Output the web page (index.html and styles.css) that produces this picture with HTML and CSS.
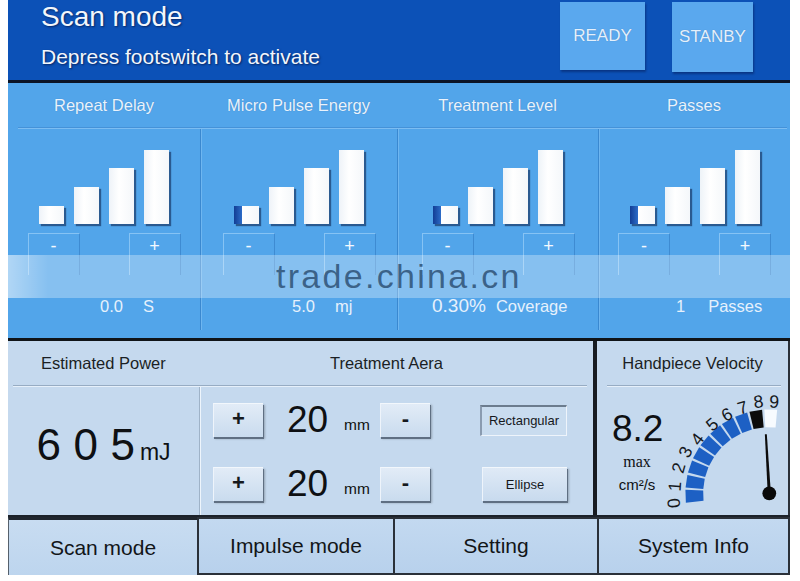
FILE: index.html
```html
<!DOCTYPE html>
<html>
<head>
<meta charset="utf-8">
<link rel="stylesheet" href="styles.css">
</head>
<body>
<div class="screen">
  <header class="top">
    <div class="title">
      <div class="mode">Scan mode</div>
      <div class="hint">Depress footswitch to activate</div>
    </div>
    <div class="status">
      <div class="sbtn ready">READY</div>
      <div class="sbtn stanby">STANBY</div>
    </div>
  </header>

  <section class="params">
    <div class="phead">
      <div class="plabel">Repeat Delay</div>
      <div class="plabel">Micro Pulse Energy</div>
      <div class="plabel">Treatment Level</div>
      <div class="plabel">Passes</div>
    </div>
    <div class="psep"></div>
    <div class="pbody">
      <div class="pcol">
        <div class="bars"><span class="bar b1"></span><span class="bar b2"></span><span class="bar b3"></span><span class="bar b4"></span></div>
        <div class="pm"><span class="pbtn">-</span><span class="pbtn">+</span></div>
        <div class="val v1"><span>0.0</span><span class="unit">S</span></div>
      </div>
      <div class="pcol">
        <div class="bars"><span class="bar b1 on"></span><span class="bar b2"></span><span class="bar b3"></span><span class="bar b4"></span></div>
        <div class="pm"><span class="pbtn">-</span><span class="pbtn">+</span></div>
        <div class="val v2"><span>5.0</span><span class="unit">mj</span></div>
      </div>
      <div class="pcol">
        <div class="bars"><span class="bar b1 on"></span><span class="bar b2"></span><span class="bar b3"></span><span class="bar b4"></span></div>
        <div class="pm"><span class="pbtn">-</span><span class="pbtn">+</span></div>
        <div class="val v3"><span class="big">0.30%</span><span class="unit">Coverage</span></div>
      </div>
      <div class="pcol">
        <div class="bars"><span class="bar b1 on"></span><span class="bar b2"></span><span class="bar b3"></span><span class="bar b4"></span></div>
        <div class="pm"><span class="pbtn">-</span><span class="pbtn">+</span></div>
        <div class="val v4"><span>1</span><span class="unit">Passes</span></div>
      </div>
    </div>
  </section>

  <section class="mid">
    <div class="mleft">
      <div class="mhead">
        <div class="mlabel power-l">Estimated Power</div>
        <div class="mlabel area-l">Treatment Aera</div>
      </div>
      <div class="msep"></div>
      <div class="mbody">
        <div class="power"><span class="pw"><span>6</span><span>0</span><span>5</span></span><span class="pwu">mJ</span></div>
        <div class="area">
          <div class="trow">
            <span class="sq">+</span><span class="num">20</span><span class="mm">mm</span><span class="sq">-</span>
            <span class="shape pressed">Rectangular</span>
          </div>
          <div class="trow">
            <span class="sq">+</span><span class="num">20</span><span class="mm">mm</span><span class="sq">-</span>
            <span class="shape raised">Ellipse</span>
          </div>
        </div>
      </div>
    </div>
    <div class="mdiv"></div>
    <div class="mright">
      <div class="mhead single"><div class="mlabel">Handpiece Velocity</div></div>
      <div class="msep short"></div>
      <div class="vbody">
        <div class="readout">
          <div class="speed">8.2</div>
          <div class="max">max</div>
          <div class="cms">cm²/s</div>
        </div>
        <svg class="gauge" width="130" height="128" viewBox="0 0 130 128">
          <g class="segs">
            <polygon class="seg" points="44,101.8 26,100.5 26,113.5 44,112.2" transform="rotate(-2 111 107)"/>
            <polygon class="seg" points="44,101.8 26,100.5 26,113.5 44,112.2" transform="rotate(8.3 111 107)"/>
            <polygon class="seg" points="44,101.8 26,100.5 26,113.5 44,112.2" transform="rotate(18.7 111 107)"/>
            <polygon class="seg" points="44,101.8 26,100.5 26,113.5 44,112.2" transform="rotate(29 111 107)"/>
            <polygon class="seg" points="44,101.8 26,100.5 26,113.5 44,112.2" transform="rotate(39.3 111 107)"/>
            <polygon class="seg" points="44,101.8 26,100.5 26,113.5 44,112.2" transform="rotate(49.7 111 107)"/>
            <polygon class="seg" points="44,101.8 26,100.5 26,113.5 44,112.2" transform="rotate(60 111 107)"/>
            <polygon class="seg" points="44,101.8 26,100.5 26,113.5 44,112.2" transform="rotate(70.3 111 107)"/>
            <polygon class="seg cur" points="44,101.8 26,100.5 26,113.5 44,112.2" transform="rotate(80.7 111 107)"/>
            <polygon class="seg off" points="44,101.8 26,100.5 26,113.5 44,112.2" transform="rotate(91 111 107)"/>
          </g>
          <g class="ticks">
            <text x="14" y="117" transform="rotate(-95 14 117)">0</text>
            <text x="15" y="100" transform="rotate(-86 15 100)">1</text>
            <text x="19" y="81" transform="rotate(-74 19 81)">2</text>
            <text x="26" y="65" transform="rotate(-64 26 65)">3</text>
            <text x="38" y="52" transform="rotate(-53 38 52)">4</text>
            <text x="53" y="37" transform="rotate(-40 53 37)">5</text>
            <text x="68" y="27" transform="rotate(-28.6 68 27)">6</text>
            <text x="84" y="20" transform="rotate(-17.4 84 20)">7</text>
            <text x="100" y="14" transform="rotate(-6.8 100 14)">8</text>
            <text x="116" y="14" transform="rotate(2.5 116 14)">9</text>
          </g>
          <polygon class="needle" points="106.5,47 108.5,47 112.6,107 109.4,107"/>
          <circle class="knob" cx="111" cy="107" r="7"/>
        </svg>
      </div>
    </div>
  </section>

  <nav class="tabs">
    <div class="tab active">Scan mode</div>
    <div class="tab">Impulse mode</div>
    <div class="tab">Setting</div>
    <div class="tab">System Info</div>
  </nav>

  <div class="watermark"><span>trade.china.cn</span></div>
</div>
</body>
</html>
```

FILE: styles.css
```css
* { box-sizing: border-box; }
html, body { margin: 0; padding: 0; background: #ffffff; }
body { font-family: "Liberation Sans", Arial, sans-serif; }

.screen {
  position: relative;
  width: 782px;
  margin-left: 8px;
}

/* ---------- header ---------- */
.top {
  height: 83px;
  background: #0c51b7;
  border-bottom: 3px solid #0b1426;
  display: flex;
  justify-content: space-between;
}
.title {
  padding: 1px 0 0 33px;
  color: #f2f6fc;
  text-shadow: 1px 1px 2px rgba(0, 0, 30, 0.55);
}
.mode { font-size: 28px; line-height: 32px; }
.hint { font-size: 21px; line-height: 24px; margin-top: 12px; }
.status {
  display: flex;
  gap: 27px;
  padding: 2px 37px 0 0;
}
.sbtn {
  background: #5aa8ee;
  color: #e4f0fc;
  font-size: 17px;
  display: flex;
  align-items: center;
  justify-content: center;
  box-shadow: 1px 2px 2px rgba(0, 0, 40, 0.35);
  text-shadow: 0 0 1px rgba(0, 0, 40, 0.25);
}
.ready { width: 85px; height: 68px; }
.stanby { width: 81px; height: 70px; }

/* ---------- parameter panel ---------- */
.params {
  background: #52a5ea;
  border-bottom: 3px solid #101418;
}
.phead {
  display: grid;
  grid-template-columns: 192px 197px 201px 192px;
  height: 44px;
  align-items: center;
}
.plabel {
  text-align: center;
  color: #e9f3fd;
  font-size: 16.5px;
  text-shadow: 0 0 1px rgba(0, 30, 80, 0.3);
}
.psep {
  height: 2px;
  margin: 0 3px 0 10px;
  border-top: 1px solid #4592d8;
  border-bottom: 1px solid #7cbdf2;
}
.pbody {
  display: grid;
  grid-template-columns: 192px 197px 201px 192px;
  height: 209px;
}
.pcol {
  height: 201px;
  padding-top: 21px;
  display: flex;
  flex-direction: column;
}
.pcol + .pcol {
  border-left: 1px solid #3a88d0;
  box-shadow: inset 1px 0 0 #6fb6f0;
}
.bars {
  height: 74px;
  display: flex;
  align-items: flex-end;
  justify-content: center;
  gap: 10px;
}
.bar {
  width: 25px;
  background: linear-gradient(90deg, #eef3f8, #ffffff 40%, #f4f7fa);
  box-shadow: 2px 2px 1px rgba(16, 40, 84, 0.6);
}
.bar.on { background: linear-gradient(90deg, #123d94 0, #2c6cc8 8px, #ffffff 8px, #f4f7fa); }
.b1 { height: 18px; }
.b2 { height: 37px; }
.b3 { height: 56px; }
.b4 { height: 74px; }
.pm {
  margin-top: 9px;
  height: 42px;
  display: flex;
  align-items: flex-start;
  justify-content: center;
  gap: 49px;
}
.pbtn {
  width: 52px;
  height: 42px;
  padding-top: 3px;
  border: 1px solid #86c3f4;
  border-right-color: #3e8bd2;
  border-bottom: none;
  color: #f4f9ff;
  font-size: 18px;
  line-height: 18px;
  text-align: center;
}
.val {
  margin-top: 21px;
  display: flex;
  align-items: baseline;
  color: #e6f1fc;
  font-size: 16.5px;
  line-height: 20px;
}
.val .big { font-size: 19px; }
.v1 { padding-left: 92px; gap: 20px; }
.v2 { padding-left: 91px; gap: 20px; }
.v3 { padding-left: 34px; gap: 10px; }
.v4 { padding-left: 77px; gap: 23px; }

/* ---------- middle panel ---------- */
.mid {
  display: flex;
  background: #c5d9ee;
  border-bottom: 2px solid #1c222a;
  height: 176px;
}
.mleft { width: 585px; }
.mhead {
  height: 44px;
  display: grid;
  grid-template-columns: 192px 393px;
  align-items: center;
}
.mhead.single { grid-template-columns: 1fr; }
.mlabel {
  text-align: center;
  font-size: 16.5px;
  color: #1b1f24;
}
.power-l { text-align: left; padding-left: 33px; }
.area-l { margin-left: -20px; }
.msep {
  height: 2px;
  margin: 0 6px 0 5px;
  border-top: 1px solid #97acc3;
  border-bottom: 1px solid #e6f0fa;
}
.msep.short { margin: 0 7px 0 10px; }
.mbody {
  display: flex;
  height: 128px;
}
.power {
  width: 192px;
  border-right: 1px solid #9fb3c8;
  display: flex;
  align-items: baseline;
  justify-content: center;
  gap: 5px;
  padding-top: 33px;
  color: #0e1013;
}
.pw {
  display: inline-flex;
  gap: 12.5px;
  font-size: 44px;
}
.pwu { font-size: 23px; }
.area {
  flex: 1;
  border-left: 1px solid #eef5fc;
  padding: 16px 0 0 12px;
}
.trow {
  display: flex;
  align-items: center;
  height: 34px;
}
.trow + .trow { margin-top: 30px; }
.sq {
  width: 50px;
  height: 34px;
  background: linear-gradient(#e2ecf7, #c9dbee);
  border-top: 1px solid #f2f7fc;
  border-left: 1px solid #eef4fb;
  box-shadow: 1px 2px 0 #5f6f82, 2px 2px 2px rgba(0, 0, 0, 0.25);
  font-size: 22px;
  font-weight: bold;
  line-height: 30px;
  text-align: center;
  color: #16191d;
}
.num {
  width: 57px;
  margin-left: 24px;
  font-size: 37px;
  color: #0e1013;
  line-height: 34px;
}
.mm {
  width: 36px;
  font-size: 15.5px;
  color: #111;
  align-self: flex-end;
  padding-bottom: 3px;
}
.shape {
  margin-left: 50px;
  height: 31px;
  display: flex;
  align-items: center;
  justify-content: center;
  font-size: 13px;
  color: #15181c;
}
.shape.pressed {
  width: 87px;
  background: #c9dcef;
  border-top: 2px solid #6c7c8e;
  border-left: 2px solid #8a9bb0;
  border-right: 1px solid #eef4fb;
  border-bottom: 1px solid #eef4fb;
}
.shape.raised {
  width: 85px;
  height: 34px;
  margin-left: 52px;
  background: linear-gradient(#dfeaf6, #c8daee);
  border-top: 1px solid #f2f7fc;
  border-left: 1px solid #eef4fb;
  box-shadow: 1px 2px 0 #5f6f82, 2px 2px 2px rgba(0, 0, 0, 0.25);
}
.mdiv {
  width: 4px;
  background: #181c22;
}
.mright {
  width: 193px;
  border-right: 2px solid #2a3038;
}
.vbody {
  display: flex;
  height: 128px;
}
.readout {
  width: 65px;
  padding-left: 15px;
  text-align: center;
  color: #0e1013;
}
.speed { font-size: 37px; line-height: 37px; margin-top: 23px; width: 50px; }
.max {
  font-family: "Liberation Serif", "Times New Roman", serif;
  font-size: 16px;
  line-height: 18px;
  margin-top: 6px;
  width: 50px;
}
.cms { font-size: 15px; line-height: 18px; margin-top: 5px; width: 50px; }
.gauge { display: block; margin-left: -2px; }
.seg { fill: #1d60c4; }
.seg.cur { fill: #0c0c0c; }
.seg.off { fill: #f7fbff; }
.ticks text {
  font-family: "Liberation Sans", Arial, sans-serif;
  font-size: 18px;
  fill: #15181c;
  text-anchor: middle;
  dominant-baseline: central;
}
.needle { fill: #0c0c0c; }
.knob { fill: #0a0a0a; }

/* ---------- tabs ---------- */
.tabs {
  display: grid;
  grid-template-columns: 189px 196px 204px 193px;
  height: 58px;
}
.tab {
  display: flex;
  align-items: center;
  justify-content: center;
  font-size: 21px;
  color: #121518;
  background: linear-gradient(#c3d9f0, #b8d1ec);
  border-top: 2px solid #2a3038;
  border-left: 2px solid #2a3038;
  border-bottom: 2px solid #2a3038;
}
.tab:last-child { border-right: 2px solid #2a3038; }
.tab.active {
  border-left: 1px solid #55606c;
  border-bottom: none;
  border-top: 3px solid #20262e;
  background: linear-gradient(#c8dcf1, #bdd5ee);
}

/* ---------- watermark overlay ---------- */
.watermark {
  position: absolute;
  left: 0;
  top: 255px;
  width: 782px;
  height: 43px;
  background: linear-gradient(90deg, rgba(255,255,255,0.55), rgba(255,255,255,0.3) 40px, rgba(255,255,255,0.3));
  pointer-events: none;
}
.watermark span {
  position: absolute;
  left: 268px;
  top: 2px;
  font-size: 34px;
  line-height: 38px;
  color: rgba(38, 72, 108, 0.78);
  letter-spacing: 2.3px;
}
```
